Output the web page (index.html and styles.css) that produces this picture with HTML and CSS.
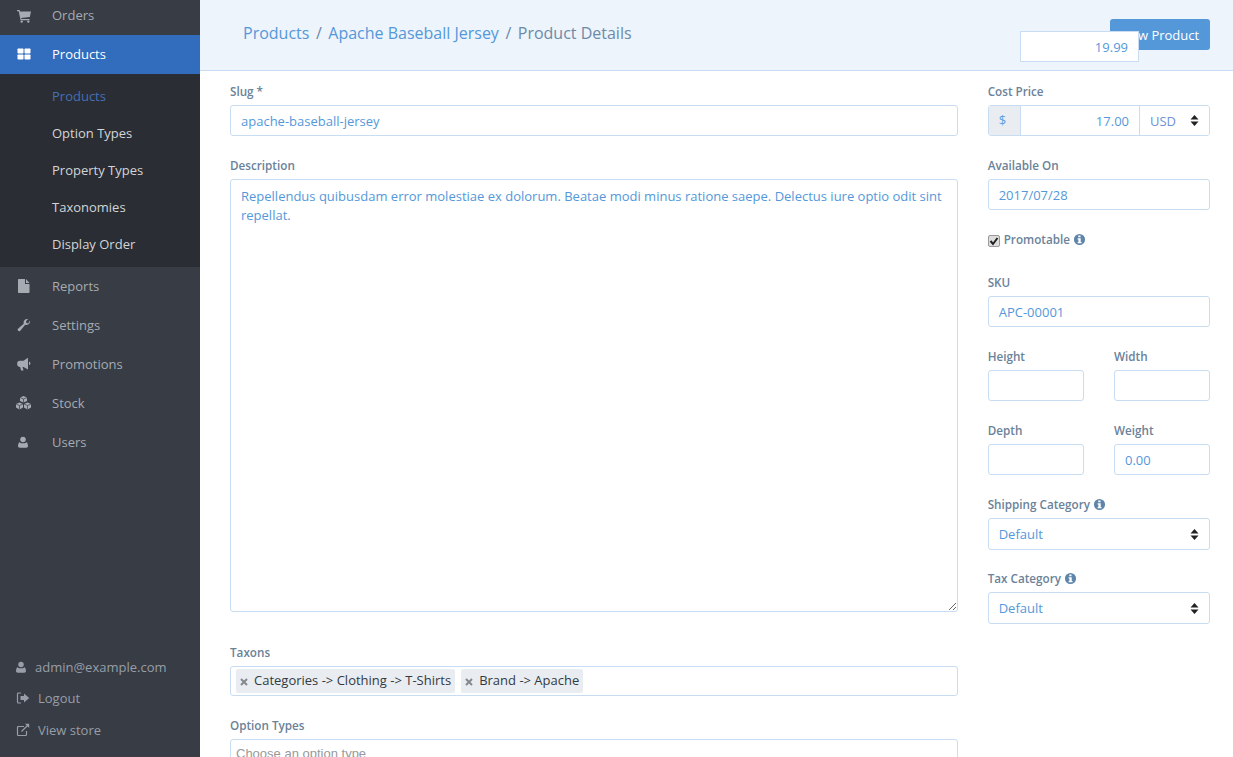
FILE: index.html
```html
<!DOCTYPE html>
<html lang="en">
<head>
<meta charset="utf-8">
<title>Product Details</title>
<link rel="stylesheet" href="styles.css">
</head>
<body>
<div class="app">
  <aside class="sidebar">
    <nav class="nav">
      <a class="nav-item"><svg class="nav-icon cart" viewBox="0 0 14 14"><path d="M0 1h2.600l.4 1.500h11l-1.200 5.400-8.600 1 .3 1.100h8v1.200H3.600L1.700 2.200H0z"/><circle cx="4.700" cy="12.600" r="1.200"/><circle cx="11.300" cy="12.600" r="1.200"/></svg><span>Orders</span></a>
      <a class="nav-item active"><svg class="nav-icon" viewBox="0 0 14 14"><rect x=".5" y="1.500" width="6" height="5" rx=".7"/><rect x="7.500" y="1.500" width="6" height="5" rx=".7"/><rect x=".5" y="7.500" width="6" height="5" rx=".7"/><rect x="7.500" y="7.500" width="6" height="5" rx=".7"/></svg><span>Products</span></a>
      <div class="subnav">
        <a class="sub-item current">Products</a>
        <a class="sub-item">Option Types</a>
        <a class="sub-item">Property Types</a>
        <a class="sub-item">Taxonomies</a>
        <a class="sub-item">Display Order</a>
      </div>
      <a class="nav-item"><svg class="nav-icon" viewBox="0 0 14 14"><path d="M1.800 0H8v5h4.500v8.200a.8.8 0 0 1-.8.8H1.800a.8.8 0 0 1-.8-.8V.8a.8.8 0 0 1 .8-.8zM9 0l3.500 4H9z"/></svg><span>Reports</span></a>
      <a class="nav-item"><svg class="nav-icon" viewBox="0 0 14 14"><path d="M13 2.600c.5 2-1 4.400-3.600 4.400-.5 0-.9-.1-1.200-.2L3.300 12.700a1.500 1.500 0 0 1-2.300-2l5.700-5a3.600 3.600 0 0 1 4.500-4.600L9 3.300l.5 1.700 1.700.4z"/></svg><span>Settings</span></a>
      <a class="nav-item"><svg class="nav-icon" viewBox="0 0 14 14"><path d="M11 .8v11.600L6.500 10H5.500l1 3.400H4.100L3.100 10A2.800 2.800 0 0 1 .2 6.800 2.800 2.800 0 0 1 3 3.800h3.500zM12 4.500a1.900 1.900 0 0 1 0 3.700z"/></svg><span>Promotions</span></a>
      <a class="nav-item"><svg class="nav-icon wide" viewBox="0 0 17 14"><path d="M8.500 0L12 1.500V5L8.500 6.500 5 5V1.500zM4.500 6.500L8 8v3.500L4.500 13.500 1 11.500V8zM12.500 6.500L16 8v3.500l-3.500 2L9 11.500V8z"/><path class="cube-lines" d="M5 1.500L8.500 3 12 1.500M8.500 3v3.500M1 8l3.500 1.500L8 8M4.500 9.500v4M9 8l3.500 1.500L16 8M12.500 9.500v4"/></svg><span>Stock</span></a>
      <a class="nav-item"><svg class="nav-icon person" viewBox="0 0 14 14"><circle cx="7" cy="4" r="3.200"/><path d="M3 7.200c1 1 2.500 1.300 4 1.300s3-.3 4-1.300c1.300.6 1.800 2.500 1.800 4.600 0 1.300-.8 2-2 2H3.200c-1.200 0-2-.7-2-2 0-2.100.5-4 1.800-4.600z"/></svg><span>Users</span></a>
    </nav>
    <div class="account">
      <a class="account-item"><svg class="acc-icon person" viewBox="0 0 14 14"><circle cx="7" cy="4" r="3.200"/><path d="M3 7.200c1 1 2.500 1.300 4 1.300s3-.3 4-1.300c1.300.6 1.800 2.500 1.800 4.600 0 1.300-.8 2-2 2H3.200c-1.200 0-2-.7-2-2 0-2.100.5-4 1.800-4.600z"/></svg><span>admin@example.com</span></a>
      <a class="account-item"><svg class="acc-icon" viewBox="0 0 14 14"><path d="M5 2H2.500A1 1 0 0 0 1.500 3v8a1 1 0 0 0 1 1H5" fill="none" stroke="currentColor" stroke-width="1.200"/><path d="M8 2.500L13.200 7 8 11.500V9H4.500V5H8z"/></svg><span>Logout</span></a>
      <a class="account-item"><svg class="acc-icon" viewBox="0 0 14 14"><path d="M10.500 8v3.500a1 1 0 0 1-1 1H2.500a1 1 0 0 1-1-1v-7a1 1 0 0 1 1-1H8M5.500 8.500L12 2" fill="none" stroke="currentColor" stroke-width="1.200"/><path d="M9 .8h4.200V5z"/></svg><span>View store</span></a>
    </div>
  </aside>

  <div class="page">
    <header class="topbar">
      <div class="crumbs"><a>Products</a><i>/</i><a>Apache Baseball Jersey</a><i>/</i><span>Product Details</span></div>
      <button class="primary-btn">New Product</button>
    </header>

    <input class="float-price" value="19.99">

    <main class="content">
      <section class="col-main">
        <div class="field"><label>Slug *</label><input class="control" value="apache-baseball-jersey"></div>
        <div class="field tall"><label>Description</label><textarea class="control description">Repellendus quibusdam error molestiae ex dolorum. Beatae modi minus ratione saepe. Delectus iure optio odit sint repellat.</textarea></div>
        <div class="field"><label>Taxons</label>
          <div class="tagbox">
            <span class="tag"><svg class="tag-x" viewBox="0 0 8 8"><path d="M1 1l6 6M7 1L1 7"/></svg>Categories -&gt; Clothing -&gt; T-Shirts</span>
            <span class="tag"><svg class="tag-x" viewBox="0 0 8 8"><path d="M1 1l6 6M7 1L1 7"/></svg>Brand -&gt; Apache</span>
          </div>
        </div>
        <div class="field"><label>Option Types</label><div class="option-box">Choose an option type</div></div>
      </section>

      <section class="col-side">
        <div class="field"><label>Cost Price</label>
          <div class="price-group">
            <span class="addon">$</span>
            <input class="price-input" value="17.00">
            <select class="currency"><option>USD</option></select>
          </div>
        </div>
        <div class="field"><label>Available On</label><input class="control" value="2017/07/28"></div>
        <div class="field check-field">
          <input class="check" type="checkbox" checked>
          <label>Promotable</label>
          <svg class="info" viewBox="0 0 14 14"><path fill-rule="evenodd" d="M7 1a6 6 0 1 1 0 12A6 6 0 0 1 7 1zM5.700 2.800v1.900h2.400V2.800zM5 5.700v1.200h.8v2.700H5v1.400h4.200V9.600h-.9V5.700z"/></svg>
        </div>
        <div class="field"><label>SKU</label><input class="control" value="APC-00001"></div>
        <div class="pair">
          <div class="field"><label>Height</label><input class="control"></div>
          <div class="field"><label>Width</label><input class="control"></div>
        </div>
        <div class="pair">
          <div class="field"><label>Depth</label><input class="control"></div>
          <div class="field"><label>Weight</label><input class="control" value="0.00"></div>
        </div>
        <div class="field narrow-gap"><label>Shipping Category <svg class="info" viewBox="0 0 14 14"><path fill-rule="evenodd" d="M7 1a6 6 0 1 1 0 12A6 6 0 0 1 7 1zM5.700 2.800v1.900h2.400V2.800zM5 5.700v1.200h.8v2.700H5v1.400h4.200V9.600h-.9V5.700z"/></svg></label><select class="control pick"><option>Default</option></select></div>
        <div class="field narrow-gap"><label>Tax Category <svg class="info" viewBox="0 0 14 14"><path fill-rule="evenodd" d="M7 1a6 6 0 1 1 0 12A6 6 0 0 1 7 1zM5.700 2.800v1.900h2.400V2.800zM5 5.700v1.200h.8v2.700H5v1.400h4.200V9.600h-.9V5.700z"/></svg></label><select class="control pick"><option>Default</option></select></div>
      </section>
    </main>
  </div>
</div>
</body>
</html>
```

FILE: styles.css
```css
* { box-sizing: border-box; }
html, body { margin: 0; height: 100%; overflow: hidden; }
body { font-family: "Open Sans", sans-serif; font-size: 13px; color: #5498da; background: #fff; }
.app { display: flex; height: 757px; }

.sidebar { width: 200px; flex: none; background: #383c44; display: flex; flex-direction: column; justify-content: space-between; }
.nav { margin-top: -4px; }
.nav-item { display: flex; align-items: center; height: 39px; padding: 0 0 2px 17px; color: #a6abb2; }
.nav-item span { margin-left: 21px; }
.nav-item.active { background: #316cbd; color: #fff; }
.nav-icon { width: 14px; height: 14px; fill: currentColor; flex: none; }
.nav-icon.cart { margin-top: 2px; }
.nav-icon.wide { width: 17px; margin: 0 -1px 0 -2px; }
.nav-icon.person { width: 12px; height: 12px; margin-right: 2px; }
.cube-lines { fill: none; stroke: #383c44; stroke-width: .7; }
.subnav { background: #2a2d33; padding: 4px 0; }
.sub-item { display: block; height: 37px; line-height: 37px; padding-left: 52px; color: #d3d5d8; }
.sub-item.current { color: #4470b4; }
.account { padding-bottom: 11px; }
.account-item { display: flex; align-items: center; height: 31.500px; padding-left: 16px; color: #979ea8; }
.account-item span { margin-left: 8px; }
.account-item:nth-child(2) { padding-bottom: 2px; }
.acc-icon { width: 14px; height: 14px; fill: currentColor; flex: none; }
.acc-icon.person { width: 12px; height: 12px; margin-left: -1px; }

.page { flex: 1; min-width: 0; position: relative; }
.topbar { height: 71px; background: #edf4fc; border-bottom: 1px solid #c9ddf2; display: flex; justify-content: space-between; align-items: flex-start; padding: 19px 23px 0 43px; }
.crumbs { font-size: 16px; line-height: 28px; display: flex; color: #6c8aa8; }
.crumbs a { color: #5498da; }
.crumbs i { font-style: normal; margin: 0 6.500px; color: #6c8aa8; }
.primary-btn { width: 100px; height: 31px; border: 0; border-radius: 3px; background: #5498da; color: #fff; font: 13px "Open Sans", sans-serif; }
.float-price { position: absolute; left: 820px; top: 31px; width: 119px; height: 31px; border: 1px solid #c9ddf2; background: #fff; color: #5498da; font: 13px "Open Sans", sans-serif; text-align: right; padding: 0 10px; outline: 0; }

.content { display: flex; gap: 29.700px; padding: 12px 23px 0 30px; }
.col-main { width: 728px; flex: none; }
.col-side { flex: 1; min-width: 0; }
.field { margin-bottom: 21px; }
.field.tall { margin-bottom: 32px; }
.field.narrow-gap { margin-bottom: 20px; }
label { display: block; font-size: 11.700px; font-weight: 600; line-height: 16px; margin-bottom: 6px; height: 16px; color: #6b8299; }
.control { display: block; width: 100%; height: 31px; border: 1px solid #c9ddf2; border-radius: 3px; padding: 0 10px; background: #fff; color: #5498da; font: 13px "Open Sans", sans-serif; outline: 0; }
.description { height: 433px; padding: 7px 10px; line-height: 19px; }
.pick { height: 32px; appearance: none; background: #fff url("data:image/svg+xml,%3Csvg xmlns='http://www.w3.org/2000/svg' viewBox='0 0 9 11'%3E%3Cpath fill='%23222' d='M4.500 0L8.500 4.500H.5zM.5 6.500h8L4.500 11z'/%3E%3C/svg%3E") no-repeat right 10px center / 9px 11px; }

.tagbox { height: 30px; border: 1px solid #c9ddf2; border-radius: 3px; display: flex; align-items: center; gap: 6px; padding-left: 5px; }
.tag { height: 24px; line-height: 22px; padding: 0 4px; background: #e9edf1; border-radius: 2px; color: #343a42; white-space: nowrap; }
.tag-x { width: 8px; height: 8px; margin-right: 6px; vertical-align: -1px; fill: none; stroke: #85898e; stroke-width: 2; }
.option-box { height: 31px; border: 1px solid #c9ddf2; border-radius: 3px 3px 0 0; padding: 4px 5px; color: #999; font: 13px/20px "Liberation Sans", sans-serif; }

.price-group { display: flex; height: 31px; border: 1px solid #c9ddf2; border-radius: 3px; overflow: hidden; }
.addon { width: 32px; flex: none; background: #e9edf1; border-right: 1px solid #c9ddf2; padding-left: 10px; line-height: 29px; color: #5a9fe3; }
.price-input { flex: 1; min-width: 0; border: 0; border-right: 1px solid #c9ddf2; text-align: right; padding: 0 10px; color: #5498da; font: 13px "Open Sans", sans-serif; outline: 0; }
.currency { width: 69px; flex: none; border: 0; appearance: none; padding: 0 10px; color: #6f8fd6; font: 13px "Open Sans", sans-serif; outline: 0; background: #fff url("data:image/svg+xml,%3Csvg xmlns='http://www.w3.org/2000/svg' viewBox='0 0 9 11'%3E%3Cpath fill='%23222' d='M4.500 0L8.500 4.500H.5zM.5 6.500h8L4.500 11z'/%3E%3C/svg%3E") no-repeat right 10px center / 9px 11px; }

.check-field { display: flex; align-items: center; height: 16px; margin: 0 0 27px; }
.check-field label { margin: 0 3px 0 4px; }
.check { appearance: none; width: 12px; height: 12px; margin: 3px 0 0; border: 1px solid #999; border-radius: 2px; background: #dedede url("data:image/svg+xml,%3Csvg xmlns='http://www.w3.org/2000/svg' viewBox='0 0 12 12'%3E%3Cpath fill='none' stroke='%23222' stroke-width='2' d='M2.500 6l2.500 3 4.500-6'/%3E%3C/svg%3E") center / 12px 12px no-repeat; }
.info { width: 13px; height: 13px; fill: #5f86aa; vertical-align: -2px; }
.pair { display: grid; grid-template-columns: 96px 96px; justify-content: space-between; }
```
